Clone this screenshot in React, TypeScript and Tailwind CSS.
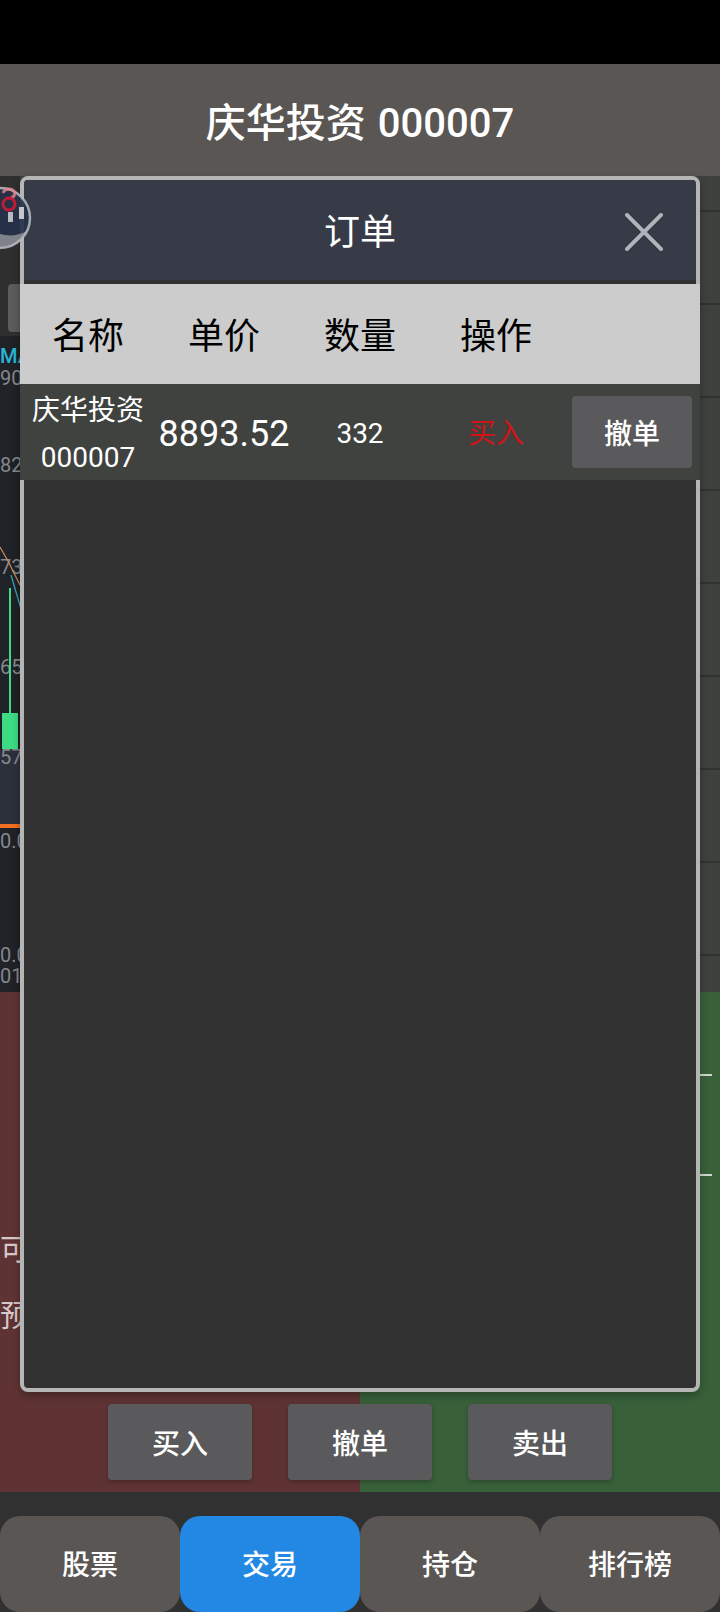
const font = { fontFamily: '"Roboto", "Noto Sans CJK SC", sans-serif' };

const chartLabels = [
  { text: "MA", top: 344, color: "text-[#2bb5d8]", cls: "font-medium" },
  { text: "90", top: 366, color: "text-[#85878a]", cls: "" },
  { text: "82", top: 453, color: "text-[#85878a]", cls: "" },
  { text: "73", top: 555, color: "text-[#85878a]", cls: "" },
  { text: "65", top: 655, color: "text-[#85878a]", cls: "" },
  { text: "57", top: 745, color: "text-[#85878a]", cls: "" },
  { text: "0.0", top: 829, color: "text-[#85878a]", cls: "" },
  { text: "0.0", top: 943, color: "text-[#85878a]", cls: "" },
  { text: "01", top: 964, color: "text-[#85878a]", cls: "" },
];

function ActionButton({ label }: { label: string }) {
  return (
    <div className="flex h-[76px] w-[144px] items-center justify-center rounded-[4px] bg-[#5a5a5c] pt-[5px] text-[28px] font-medium text-white shadow-[0_2px_4px_rgba(0,0,0,0.25)]">
      {label}
    </div>
  );
}

function NavItem({ label, active }: { label: string; active?: boolean }) {
  return (
    <div
      className={`flex h-full flex-1 items-center justify-center rounded-[20px] pt-[3px] text-[28px] font-medium text-white ${
        active ? "bg-[#2288e4]" : "bg-[#5a5654]"
      }`}
    >
      {label}
    </div>
  );
}

function Background() {
  return (
    <>
      <div className="relative flex h-[816px] bg-[#3e423e]">
        <div className="flex w-[20px] flex-col bg-[#1f2226]">
          <div className="h-[160px] bg-[#2f2f2f]" />
          <div className="h-[414px]" />
          <div className="h-[74px] bg-[#2c303b]" />
          <div className="h-[4px] bg-[#f07020]" />
        </div>
        <div className="flex flex-1 flex-col">
          <div className="h-[36px] border-b-2 border-[#303330]" />
          {Array.from({ length: 8 }).map((_, i) => (
            <div key={i} className="h-[93px] border-b-2 border-[#303330]" />
          ))}
        </div>
        <div className="absolute left-[8px] top-[108px] h-[48px] w-[20px] rounded-[4px] bg-[#5c5c5e]" />
        {chartLabels.map((l, i) => (
          <div
            key={i}
            className={`absolute left-0 text-[20px] leading-[24px] ${l.color} ${l.cls}`}
            style={{ top: l.top - 176 }}
          >
            {l.text}
          </div>
        ))}
        <svg className="absolute left-0 top-0" width="40" height="816" viewBox="0 0 40 816" fill="none">
          <path d="M0 371 L8 385 L20 409" stroke="#c9905f" strokeWidth="1.2" />
          <path d="M11 399 L21 433" stroke="#35a9c4" strokeWidth="1.2" />
          <rect x="9" y="412" width="2" height="126" fill="#3ddc84" />
          <rect x="2" y="537" width="16" height="36" fill="#3ddc84" />
        </svg>
      </div>
      <div className="flex h-[500px]">
        <div className="w-[360px] bg-[#5f3333] pl-0 pt-[225px] text-[30px] leading-[66px] text-[#d8c8c8]">
          <div>可用</div>
          <div>预计</div>
        </div>
        <div className="relative flex-1 bg-[#386039]">
          <div className="absolute right-[8px] top-[82px] h-[2px] w-[12px] bg-[#cfd8cf]" />
          <div className="absolute right-[8px] top-[182px] h-[2px] w-[12px] bg-[#cfd8cf]" />
        </div>
      </div>
    </>
  );
}

function FloatingBall() {
  return (
    <svg className="absolute left-0 top-[184px] z-20" width="34" height="68" viewBox="0 0 34 68" fill="none">
      <circle cx="0" cy="34" r="30" fill="#26324a" fillOpacity="0.92" />
      <path d="M0 64 A30 30 0 0 0 27 47 Q14 54 0 50 Z" fill="#8f9195" fillOpacity="0.85" />
      <circle cx="0" cy="34" r="30" stroke="#b9bcc4" strokeOpacity="0.85" strokeWidth="2.5" />
      <path d="M3 9 A6.5 6.5 0 0 1 15 9 A6 6 0 0 1 11 14" stroke="#e8868c" strokeOpacity="0.8" strokeWidth="3" />
      <circle cx="9" cy="20" r="6" stroke="#c01c38" strokeWidth="3" />
      <rect x="8" y="28" width="5" height="10" fill="#b8bac0" />
      <rect x="19" y="23" width="5" height="12" fill="#c4c6cc" />
    </svg>
  );
}

function Modal() {
  return (
    <div className="absolute left-[20px] top-[176px] z-10 flex h-[1216px] w-[680px] flex-col rounded-[8px] border-4 border-[#b5b5b5] bg-[#313131] shadow-[0_3px_8px_rgba(0,0,0,0.3)]">
      <div className="relative flex h-[100px] shrink-0 items-center justify-center rounded-t-[4px] bg-[#363b47] pt-[6px] text-[36px] text-white">
        订单
        <svg className="absolute right-[33px] top-[33px]" width="38" height="38" viewBox="0 0 38 38" fill="none">
          <path d="M2 2 L36 36 M36 2 L2 36" stroke="#2b2f38" strokeWidth="6" strokeLinecap="round" />
          <path d="M2 2 L36 36 M36 2 L2 36" stroke="#aeb3ba" strokeWidth="4" strokeLinecap="round" />
        </svg>
      </div>
      <div className="h-[4px] shrink-0" />
      <div className="-mx-[4px] flex h-[100px] shrink-0 items-center bg-[#cccccc] pt-[6px] text-[36px] text-black">
        {["名称", "单价", "数量", "操作", ""].map((t, i) => (
          <div key={i} className="w-[136px] text-center">
            {t}
          </div>
        ))}
      </div>
      <div className="-mx-[4px] flex h-[96px] shrink-0 items-center bg-[#3f423f] text-white">
        <div className="w-[136px] pt-[3px] text-center text-[28px] leading-[47px]">
          <div>庆华投资</div>
          <div>000007</div>
        </div>
        <div className="w-[136px] whitespace-nowrap pt-[4px] text-center text-[36px]">8893.52</div>
        <div className="w-[136px] pt-[4px] text-center text-[28px]">332</div>
        <div className="w-[136px] pt-[4px] text-center text-[28px] text-[#d01418]">买入</div>
        <div className="flex w-[136px] justify-center">
          <div className="flex h-[72px] w-[120px] items-center justify-center rounded-[4px] bg-[#5a5a5c] pt-[5px] text-[28px] font-medium">
            撤单
          </div>
        </div>
      </div>
    </div>
  );
}

export default function App() {
  return (
    <div className="relative h-[1612px] w-[720px] overflow-hidden bg-[#313131]" style={font}>
      <div className="h-[64px] bg-black" />
      <div className="flex h-[112px] items-center justify-center bg-[#5a5654] pt-[7px] text-[40px] font-medium text-white [word-spacing:2px]">
        庆华投资 000007
      </div>
      <Background />
      <div className="absolute left-0 right-0 top-[1404px] z-0 flex justify-center gap-[36px]">
        <ActionButton label="买入" />
        <ActionButton label="撤单" />
        <ActionButton label="卖出" />
      </div>
      <div className="flex h-[120px] items-end pt-[24px]">
        <NavItem label="股票" />
        <NavItem label="交易" active />
        <NavItem label="持仓" />
        <NavItem label="排行榜" />
      </div>
      <Modal />
      <FloatingBall />
    </div>
  );
}
